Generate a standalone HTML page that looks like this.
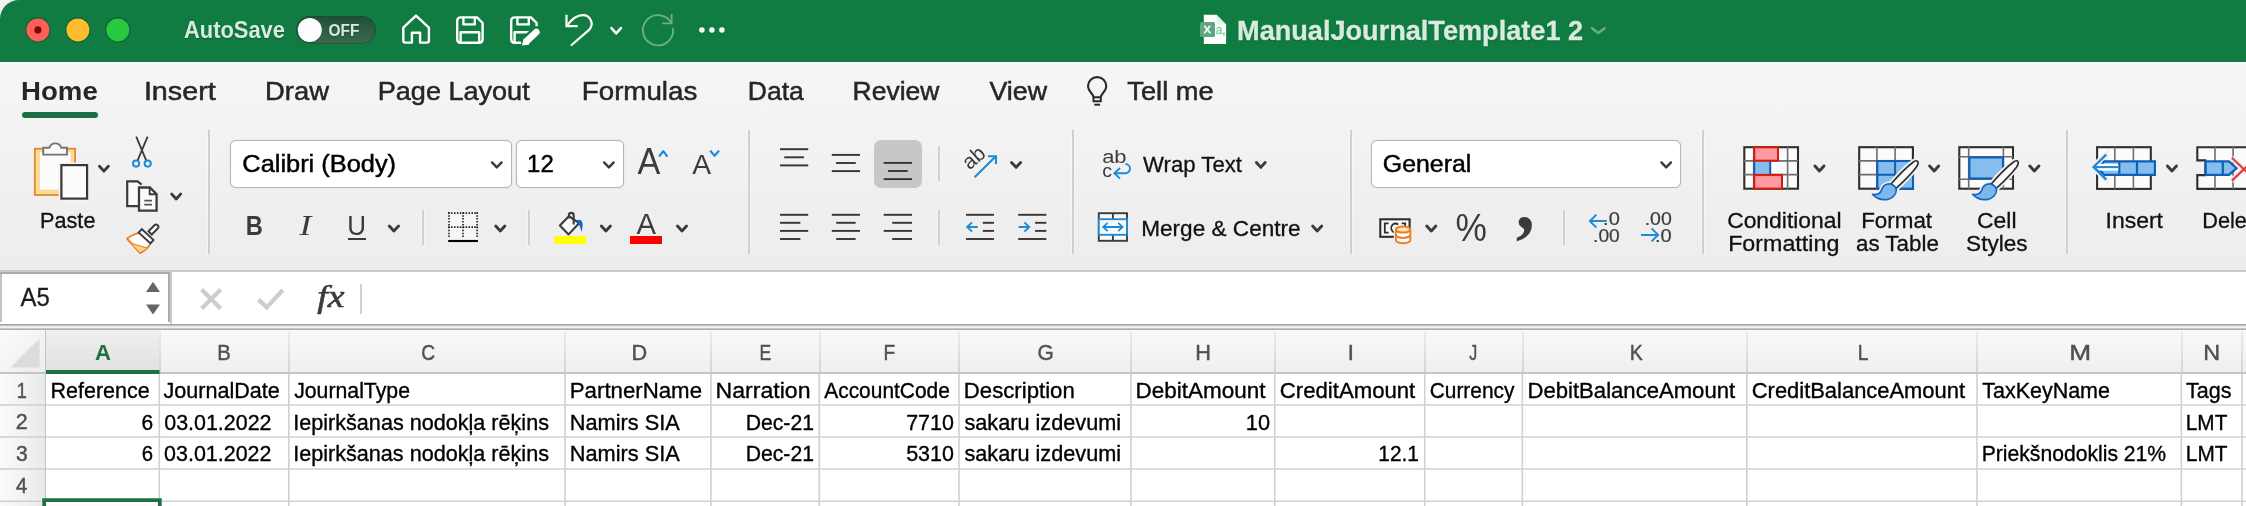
<!DOCTYPE html>
<html lang="en"><head><meta charset="utf-8"><title>ManualJournalTemplate1 2</title>
<style>
html,body{margin:0;padding:0}
body{width:2246px;height:506px;overflow:hidden;position:relative;background:#f1f1f1;font-family:"Liberation Sans",sans-serif}
#app{position:absolute;left:0;top:0;width:2246px;height:506px;overflow:hidden}
#app div{position:absolute}
.t{position:absolute;white-space:pre;line-height:normal;transform-origin:0 0;display:block}
svg{position:absolute;left:0;top:0;will-change:transform}
#txt{left:0;top:0;width:2246px;height:506px;will-change:transform}
</style></head>
<body><div id="app">
<div class="titlebar" style="left:0px;top:0px;width:2246px;height:62px;background:#107c41;border-top-left-radius:19px;"></div>
<div class="ribbon" style="left:0px;top:62px;width:2246px;height:208px;background:linear-gradient(#f6f6f6,#f3f3f3 30%,#efefef 70%,#ededed);"></div>
<div style="left:0px;top:270px;width:2246px;height:2px;background:#c9c9c9;"></div>
<div class="formulabar" style="left:0px;top:272px;width:2246px;height:52px;background:#fff;"></div>
<div style="left:0px;top:324px;width:2246px;height:1px;background:#a6a6a6;"></div>
<div style="left:0px;top:325px;width:2246px;height:1px;background:#bfbfbf;"></div>
<div style="left:0px;top:326px;width:2246px;height:1px;background:#ebebeb;"></div>
<div style="left:0px;top:327px;width:2246px;height:1px;background:#eeeeee;"></div>
<div style="left:0px;top:328px;width:2246px;height:1px;background:#c8c8c8;"></div>
<div style="left:0px;top:329px;width:2246px;height:1px;background:#adadad;"></div>
<div class="grid" style="left:0px;top:330px;width:2246px;height:176px;background:#fff;"></div>
<div class="colheads" style="left:0px;top:330px;width:2246px;height:42px;background:linear-gradient(#f9f9f9,#f4f4f4 50%,#efefef);"></div>
<div class="rowheads" style="left:0px;top:372px;width:45px;height:134px;background:linear-gradient(90deg,#fbfbfb,#f1f1f1 60%,#e9e9e9);"></div>
<div class="corner" style="left:0px;top:330px;width:45px;height:42px;background:linear-gradient(135deg,#fcfcfc,#ececec);"></div>
<div style="left:22px;top:112px;width:76px;height:6px;background:#1c6f42;border-radius:3px;"></div>
<div style="left:208px;top:130px;width:2px;height:124px;background:#cfcfcf;box-shadow:-1px 0 0 rgba(255,255,255,.4),1px 0 0 rgba(255,255,255,.4);"></div>
<div style="left:748px;top:130px;width:2px;height:124px;background:#cfcfcf;box-shadow:-1px 0 0 rgba(255,255,255,.4),1px 0 0 rgba(255,255,255,.4);"></div>
<div style="left:1072px;top:130px;width:2px;height:124px;background:#cfcfcf;box-shadow:-1px 0 0 rgba(255,255,255,.4),1px 0 0 rgba(255,255,255,.4);"></div>
<div style="left:1350px;top:130px;width:2px;height:124px;background:#cfcfcf;box-shadow:-1px 0 0 rgba(255,255,255,.4),1px 0 0 rgba(255,255,255,.4);"></div>
<div style="left:1702px;top:130px;width:2px;height:124px;background:#cfcfcf;box-shadow:-1px 0 0 rgba(255,255,255,.4),1px 0 0 rgba(255,255,255,.4);"></div>
<div style="left:2066px;top:130px;width:2px;height:124px;background:#cfcfcf;box-shadow:-1px 0 0 rgba(255,255,255,.4),1px 0 0 rgba(255,255,255,.4);"></div>
<div style="left:422px;top:210px;width:2px;height:35px;background:#cfcfcf;box-shadow:-1px 0 0 rgba(255,255,255,.4),1px 0 0 rgba(255,255,255,.4);"></div>
<div style="left:528px;top:210px;width:2px;height:35px;background:#cfcfcf;box-shadow:-1px 0 0 rgba(255,255,255,.4),1px 0 0 rgba(255,255,255,.4);"></div>
<div style="left:938px;top:146px;width:2px;height:35px;background:#cfcfcf;box-shadow:-1px 0 0 rgba(255,255,255,.4),1px 0 0 rgba(255,255,255,.4);"></div>
<div style="left:938px;top:210px;width:2px;height:35px;background:#cfcfcf;box-shadow:-1px 0 0 rgba(255,255,255,.4),1px 0 0 rgba(255,255,255,.4);"></div>
<div style="left:1563px;top:210px;width:2px;height:35px;background:#cfcfcf;box-shadow:-1px 0 0 rgba(255,255,255,.4),1px 0 0 rgba(255,255,255,.4);"></div>
<div class="combo" style="left:230px;top:140px;width:282px;height:48px;background:#fff;border:1px solid #b6b6b6;border-radius:6px;box-sizing:border-box;box-shadow:0 0 1px rgba(0,0,0,.22);"></div>
<div class="combo" style="left:516px;top:140px;width:108px;height:48px;background:#fff;border:1px solid #b6b6b6;border-radius:6px;box-sizing:border-box;box-shadow:0 0 1px rgba(0,0,0,.22);"></div>
<div style="left:347.9px;top:238px;width:17.9px;height:1.6px;background:#3b3b3b;"></div>
<div style="left:553.8px;top:236px;width:32.4px;height:8px;background:#ffff00;"></div>
<div style="left:630px;top:236px;width:32px;height:8px;background:#ff0000;"></div>
<div style="left:874px;top:140px;width:48px;height:48px;background:#c7c7c7;border-radius:7px;"></div>
<div class="combo" style="left:1371px;top:140px;width:310px;height:48px;background:#fff;border:1px solid #b6b6b6;border-radius:6px;box-sizing:border-box;box-shadow:0 0 1px rgba(0,0,0,.22);"></div>
<div style="left:0px;top:272px;width:170px;height:2px;background:#ababab;"></div>
<div style="left:0px;top:274px;width:2px;height:48px;background:#c2c2c2;"></div>
<div style="left:168px;top:272px;width:2px;height:50px;background:#ababab;"></div>
<div style="left:170px;top:272px;width:2px;height:52px;background:#cbcbcb;"></div>
<div style="left:360.2px;top:284px;width:1.4px;height:30px;background:#d2d2d2;"></div>
<div style="left:46px;top:330px;width:113.5px;height:42px;background:linear-gradient(#efefef,#e7e7e7 55%,#e1e1e1);"></div>
<div style="left:159px;top:331px;width:1.6px;height:41px;background:linear-gradient(#ececec,#d4d4d4);"></div>
<div style="left:288px;top:331px;width:1.6px;height:41px;background:linear-gradient(#ececec,#d4d4d4);"></div>
<div style="left:564px;top:331px;width:1.6px;height:41px;background:linear-gradient(#ececec,#d4d4d4);"></div>
<div style="left:710px;top:331px;width:1.6px;height:41px;background:linear-gradient(#ececec,#d4d4d4);"></div>
<div style="left:819px;top:331px;width:1.6px;height:41px;background:linear-gradient(#ececec,#d4d4d4);"></div>
<div style="left:958px;top:331px;width:1.6px;height:41px;background:linear-gradient(#ececec,#d4d4d4);"></div>
<div style="left:1130px;top:331px;width:1.6px;height:41px;background:linear-gradient(#ececec,#d4d4d4);"></div>
<div style="left:1274px;top:331px;width:1.6px;height:41px;background:linear-gradient(#ececec,#d4d4d4);"></div>
<div style="left:1424px;top:331px;width:1.6px;height:41px;background:linear-gradient(#ececec,#d4d4d4);"></div>
<div style="left:1522px;top:331px;width:1.6px;height:41px;background:linear-gradient(#ececec,#d4d4d4);"></div>
<div style="left:1746px;top:331px;width:1.6px;height:41px;background:linear-gradient(#ececec,#d4d4d4);"></div>
<div style="left:1976px;top:331px;width:1.6px;height:41px;background:linear-gradient(#ececec,#d4d4d4);"></div>
<div style="left:2181px;top:331px;width:1.6px;height:41px;background:linear-gradient(#ececec,#d4d4d4);"></div>
<div style="left:2241px;top:331px;width:1.6px;height:41px;background:linear-gradient(#ececec,#d4d4d4);"></div>
<div style="left:0px;top:372px;width:2246px;height:2px;background:#c4c4c4;"></div>
<div style="left:44.6px;top:330px;width:1.8px;height:176px;background:#c4c4c4;"></div>
<svg width="2246" height="506" viewBox="0 0 2246 506">
<circle cx="37.9" cy="29.9" r="12.6" fill="#0b6133"/>
<circle cx="37.9" cy="29.9" r="11.5" fill="#fe5f57"/>
<circle cx="77.9" cy="29.9" r="12.6" fill="#0b6133"/>
<circle cx="77.9" cy="29.9" r="11.5" fill="#febc2e"/>
<circle cx="117.8" cy="29.9" r="12.6" fill="#0b6133"/>
<circle cx="117.8" cy="29.9" r="11.5" fill="#28c840"/>
<circle cx="37.9" cy="29.9" r="3.6" fill="#7a0a05"/>
<defs><linearGradient id="tg" x1="0" y1="0" x2="0" y2="1"><stop offset="0" stop-color="#1f4f35"/><stop offset=".45" stop-color="#2a5d41"/><stop offset="1" stop-color="#386b4e"/></linearGradient></defs>
<rect x="296" y="16" width="80" height="28" rx="14" fill="url(#tg)"/>
<rect x="296.5" y="16.5" width="79" height="27" rx="13.5" fill="none" stroke="#1c4a30" stroke-width="1" opacity=".6"/>
<circle cx="309.8" cy="30.6" r="12.3" fill="#123d26" opacity=".45"/>
<circle cx="309.8" cy="30" r="12" fill="#fdfdfd"/>
<path d="M403.3 27.6 L416 15.6 L428.9 27.6 V40.6 Q428.9 42.6 426.9 42.6 H420.1 V32.8 H411.9 V42.6 H405.3 Q403.3 42.6 403.3 40.6 Z" fill="none" stroke="#fff" stroke-width="2.4" stroke-linejoin="round"/>
<path d="M460.5 17.4 H477 L482.6 23 V39.2 Q482.6 42.7 479.1 42.7 H460.7 Q457.2 42.7 457.2 39.2 V20.9 Q457.2 17.4 460.7 17.4 Z M463.4 17.4 V24.4 H474.8 V17.4 M460.6 42.7 V32.2 H479.2 V42.7" fill="none" stroke="#fff" stroke-width="2.4" stroke-linejoin="round"/>
<path d="M514.5 17.4 H531 L536.6 23 V26.5 M524 42.7 H514.7 Q511.2 42.7 511.2 39.2 V20.9 Q511.2 17.4 514.7 17.4 M517.4 17.4 V24.4 H528.8 V17.4 M514.6 42.7 V32.2 H529" fill="none" stroke="#fff" stroke-width="2.4" stroke-linejoin="round"/>
<path d="M526.6 41.3 L536.3 32.1" stroke="#107c41" stroke-width="11.6" stroke-linecap="round"/>
<path d="M526.6 41.3 L536.3 32.1" stroke="#fff" stroke-width="6.8" stroke-linecap="round"/>
<path d="M522.6 45.1 L523.8 39.4 L529 44 Z" fill="#fff" stroke="#fff" stroke-width="1" stroke-linejoin="round"/>
<path d="M566.5 14.8 V26.1 H577.7" fill="none" stroke="#fff" stroke-width="2.2" stroke-linejoin="miter"/>
<path d="M567 25.6 C571.5 19.5 576.5 15.2 582.8 15.2 A8.6 8.6 0 0 1 589.3 29.6 L571.6 45" fill="none" stroke="#fff" stroke-width="2.2" stroke-linecap="round"/>
<path d="M611.45 28.05 L616.20 33.35 L620.95 28.05" fill="none" stroke="#fff" stroke-width="2.5" stroke-linecap="round" stroke-linejoin="round"/>
<g opacity=".38" fill="none" stroke="#fff" stroke-width="1.9"><path d="M672.95 27.9 A15.1 15.1 0 1 1 671.5 23.4"/><path d="M662.1 23.4 H671.6 V14.1"/></g>
<circle cx="701.9" cy="30" r="2.75" fill="#fff"/>
<circle cx="711.9" cy="30" r="2.75" fill="#fff"/>
<circle cx="721.9" cy="30" r="2.75" fill="#fff"/>
<path d="M1203.8 14.8 H1216.5 L1226.1 24.4 V44.1 H1203.8 Z" fill="#fff"/>
<path d="M1216.5 14.8 L1226.1 24.4 H1216.5 Z" fill="#e3efe8"/>
<rect x="1200" y="21.9" width="15" height="15.2" rx="1.6" fill="#5ea781"/>
<path d="M1592.05 28.15 L1598.30 32.95 L1604.55 28.15" fill="none" stroke="#fff" stroke-width="2.5" stroke-linecap="round" stroke-linejoin="round" opacity="0.38"/>
<path d="M1093.5 97.3 C1093.5 93.4 1088 91.6 1088 86.3 A9.15 9.15 0 0 1 1106.3 86.3 C1106.3 91.6 1100.8 93.4 1100.8 97.3" fill="none" stroke="#2b2b2b" stroke-width="2.1"/>
<path d="M1093.5 97.2 H1100.8 V101.2 H1093.5 Z" fill="none" stroke="#2b2b2b" stroke-width="2"/>
<path d="M1094.3 104.7 H1100.1" stroke="#2b2b2b" stroke-width="2"/>
<rect x="34.8" y="148.7" width="40.3" height="46.3" fill="#f9dc96" stroke="#e8822a" stroke-width="1.7"/>
<rect x="39.9" y="152" width="30.7" height="37.6" fill="#fbfbfb"/>
<path d="M43.2 154.6 V147.7 H49.4 A6.2 6.2 0 0 1 61.2 147.7 H67 V154.6 Z" fill="#fbfbfb" stroke="#757575" stroke-width="1.9"/>
<rect x="58.6" y="162.4" width="31" height="38.8" fill="#f3f3f3"/>
<rect x="61.4" y="165.1" width="25.7" height="33.5" fill="#fbfbfb" stroke="#383838" stroke-width="2.2"/>
<path d="M99.45 166.25 L103.90 171.15 L108.35 166.25" fill="none" stroke="#3b3b3b" stroke-width="2.9" stroke-linecap="round" stroke-linejoin="round"/>
<path d="M136.2 136.6 L146.2 160.4 M147.6 136.6 L137.6 160.4" stroke="#3b3b3b" stroke-width="1.8" fill="none"/>
<circle cx="136.1" cy="163.6" r="3.1" fill="#f4f4f4" stroke="#1e8bd6" stroke-width="2"/><circle cx="147.7" cy="163.6" r="3.1" fill="#f4f4f4" stroke="#1e8bd6" stroke-width="2"/>
<path d="M138.4 206.2 H127.2 V181.4 H137.6 L141.6 184.6" fill="#fbfbfb" stroke="#3b3b3b" stroke-width="2.2" stroke-linejoin="miter"/>
<path d="M139 187.5 H149.9 L156.6 194.2 V210.7 H139 Z" fill="#fbfbfb" stroke="#3b3b3b" stroke-width="2.3" stroke-linejoin="miter"/>
<path d="M149.7 187.6 V194.2 H156.6" fill="none" stroke="#3b3b3b" stroke-width="1.9"/>
<path d="M144.3 200.6 H152 M144.3 204.7 H152" stroke="#555" stroke-width="1.7"/>
<path d="M171.75 194.15 L176.20 199.05 L180.65 194.15" fill="none" stroke="#3b3b3b" stroke-width="2.9" stroke-linecap="round" stroke-linejoin="round"/>
<path d="M127 238.5 Q133.4 234 140.4 232.4 L150.8 242.8 Q147.6 249.4 140 253.2 Z" fill="#fdfdfd" stroke="#e8822a" stroke-width="1.9" stroke-linejoin="round"/>
<path d="M131.2 243.2 L146.8 248 L140.1 252.2 Z" fill="#fbd38d"/>
<path d="M131.2 243.2 L146.8 248" stroke="#e8822a" stroke-width="1.2" fill="none"/>
<g transform="translate(146.1 236.2) rotate(43)"><rect x="-8" y="-2.3" width="16" height="4.6" fill="#fbfbfb" stroke="#3b3b3b" stroke-width="1.9"/></g>
<g transform="translate(153.9 229.1) rotate(-45)"><path d="M-5.4 -2.3 H3.1 A2.3 2.3 0 0 1 3.1 2.3 H-5.4 Z" fill="#fbfbfb" stroke="#3b3b3b" stroke-width="1.9"/></g>
<path d="M492.00 162.40 L496.80 167.40 L501.60 162.40" fill="none" stroke="#3b3b3b" stroke-width="2.4" stroke-linecap="round" stroke-linejoin="round"/>
<path d="M604.10 162.40 L608.90 167.40 L613.70 162.40" fill="none" stroke="#3b3b3b" stroke-width="2.4" stroke-linecap="round" stroke-linejoin="round"/>
<path d="M659.60 155.90 L663.25 151.10 L666.90 155.90" fill="none" stroke="#1e8bd6" stroke-width="2.2" stroke-linecap="round" stroke-linejoin="round"/>
<path d="M710.70 151.30 L714.60 155.70 L718.50 151.30" fill="none" stroke="#1e8bd6" stroke-width="2.2" stroke-linecap="round" stroke-linejoin="round"/>
<path d="M389.25 226.05 L393.90 230.95 L398.55 226.05" fill="none" stroke="#3b3b3b" stroke-width="2.9" stroke-linecap="round" stroke-linejoin="round"/>
<rect x="448.2" y="212.3" width="29.7" height="27" fill="#f7f7f7"/>
<g stroke="#1c1c1c" stroke-width="1.6" stroke-dasharray="1.5 1.41" fill="none"><path d="M448.2 213.1 H478"/><path d="M449 212.3 V238.4"/><path d="M477.1 212.3 V238.4"/><path d="M463 212.3 V238.4"/><path d="M448.2 227.1 H478"/></g>
<path d="M448.2 241 H477.9" stroke="#000" stroke-width="2.1"/>
<path d="M495.75 226.05 L500.30 230.95 L504.85 226.05" fill="none" stroke="#3b3b3b" stroke-width="2.9" stroke-linecap="round" stroke-linejoin="round"/>
<path d="M559.9 225.6 L568.9 216.2 L579 223.2 L568.6 234.4 Z" fill="#fafafa" stroke="#3b3b3b" stroke-width="2.1" stroke-linejoin="round"/>
<path d="M568.9 217.6 V215.3 A2.4 2.4 0 0 1 573.7 215.3 V223.8" fill="none" stroke="#3b3b3b" stroke-width="2.1" stroke-linecap="round"/>
<path d="M576.7 220.4 C579.6 218.6 582.8 221 582.7 224.6 C582.6 227.6 581.9 230.2 581.3 232.3 C580.9 228.6 579.8 225.4 577.3 222.6 Z" fill="#1565c0"/>
<path d="M601.35 226.05 L605.90 230.95 L610.45 226.05" fill="none" stroke="#3b3b3b" stroke-width="2.9" stroke-linecap="round" stroke-linejoin="round"/>
<path d="M677.45 226.05 L682.00 230.95 L686.55 226.05" fill="none" stroke="#3b3b3b" stroke-width="2.9" stroke-linecap="round" stroke-linejoin="round"/>
<path d="M780.00 149.2 H808.20" stroke="#343434" stroke-width="1.9"/>
<path d="M784.23 157.3 H803.97" stroke="#343434" stroke-width="1.9"/>
<path d="M780.00 165.4 H808.20" stroke="#343434" stroke-width="1.9"/>
<path d="M831.80 154.9 H860.00" stroke="#343434" stroke-width="1.9"/>
<path d="M836.03 163 H855.77" stroke="#343434" stroke-width="1.9"/>
<path d="M831.80 171.1 H860.00" stroke="#343434" stroke-width="1.9"/>
<path d="M883.70 162.9 H912.00" stroke="#343434" stroke-width="1.9"/>
<path d="M887.95 171 H907.75" stroke="#343434" stroke-width="1.9"/>
<path d="M883.70 179.1 H912.00" stroke="#343434" stroke-width="1.9"/>
<g transform="translate(969.4 170.6) rotate(-41)"><text x="0" y="0" font-family="Liberation Sans, sans-serif" font-size="21" textLength="23.2" lengthAdjust="spacingAndGlyphs" fill="#3b3b3b">ab</text></g>
<path d="M974.6 177.3 L995.3 156.7 M987.9 156.2 H996 V164.1" fill="none" stroke="#1e8bd6" stroke-width="2.1" stroke-linejoin="miter"/>
<path d="M1011.55 162.45 L1016.10 167.35 L1020.65 162.45" fill="none" stroke="#3b3b3b" stroke-width="2.9" stroke-linecap="round" stroke-linejoin="round"/>
<path d="M780.00 214.8 H808.20" stroke="#343434" stroke-width="1.9"/>
<path d="M780.00 222.8 H800.40" stroke="#343434" stroke-width="1.9"/>
<path d="M780.00 230.9 H808.20" stroke="#343434" stroke-width="1.9"/>
<path d="M780.00 239 H800.40" stroke="#343434" stroke-width="1.9"/>
<path d="M831.80 214.8 H860.00" stroke="#343434" stroke-width="1.9"/>
<path d="M836.20 222.8 H855.60" stroke="#343434" stroke-width="1.9"/>
<path d="M831.80 230.9 H860.00" stroke="#343434" stroke-width="1.9"/>
<path d="M836.20 239 H855.60" stroke="#343434" stroke-width="1.9"/>
<path d="M883.70 214.8 H912.00" stroke="#343434" stroke-width="1.9"/>
<path d="M892.20 222.8 H912.00" stroke="#343434" stroke-width="1.9"/>
<path d="M883.70 230.9 H912.00" stroke="#343434" stroke-width="1.9"/>
<path d="M892.20 239 H912.00" stroke="#343434" stroke-width="1.9"/>
<path d="M966.00 214.8 H994.00" stroke="#343434" stroke-width="1.9"/>
<path d="M982.80 222.8 H994.00" stroke="#343434" stroke-width="1.9"/>
<path d="M982.80 230.9 H994.00" stroke="#343434" stroke-width="1.9"/>
<path d="M966.00 239 H994.00" stroke="#343434" stroke-width="1.9"/>
<path d="M967.4 227 H977.8 M972 222.4 L967.2 227 L972 231.6" fill="none" stroke="#1e8bd6" stroke-width="1.9"/>
<path d="M1018.20 214.8 H1046.30" stroke="#343434" stroke-width="1.9"/>
<path d="M1035.10 222.8 H1046.30" stroke="#343434" stroke-width="1.9"/>
<path d="M1035.10 230.9 H1046.30" stroke="#343434" stroke-width="1.9"/>
<path d="M1018.20 239 H1046.30" stroke="#343434" stroke-width="1.9"/>
<path d="M1018.6 227 H1029 M1024.4 222.4 L1029.2 227 L1024.4 231.6" fill="none" stroke="#1e8bd6" stroke-width="1.9"/>
<path d="M1114.6 173.2 H1125.4 A4.6 4.6 0 0 0 1125.4 164" fill="none" stroke="#1e8bd6" stroke-width="1.9"/>
<path d="M1120 168 L1114.4 173.2 L1120 178.6" fill="none" stroke="#1e8bd6" stroke-width="1.9"/>
<path d="M1256.45 162.45 L1260.80 167.35 L1265.15 162.45" fill="none" stroke="#3b3b3b" stroke-width="2.9" stroke-linecap="round" stroke-linejoin="round"/>
<rect x="1098.8" y="213.2" width="28.2" height="27.6" fill="#fafafa" stroke="#3b3b3b" stroke-width="1.9"/>
<path d="M1112.9 213 V241" stroke="#3b3b3b" stroke-width="1.9"/>
<rect x="1098.8" y="219.2" width="28.2" height="15.6" fill="#fafafa" stroke="#1e8bd6" stroke-width="1.9"/>
<path d="M1103.4 227 H1122.4 M1107.6 222.8 L1103.2 227 L1107.6 231.2 M1118.2 222.8 L1122.6 227 L1118.2 231.2" fill="none" stroke="#1e8bd6" stroke-width="1.8"/>
<path d="M1312.65 226.05 L1317.20 230.95 L1321.75 226.05" fill="none" stroke="#3b3b3b" stroke-width="2.9" stroke-linecap="round" stroke-linejoin="round"/>
<path d="M1661.40 162.40 L1666.20 167.40 L1671.00 162.40" fill="none" stroke="#3b3b3b" stroke-width="2.4" stroke-linecap="round" stroke-linejoin="round"/>
<rect x="1380.3" y="219.3" width="29.3" height="17.5" fill="#fafafa" stroke="#2e2e2e" stroke-width="2.1"/>
<path d="M1388.6 223.4 H1384.8 V232.6 H1388.6 M1401.6 223.4 H1405.2 V227" fill="none" stroke="#2e2e2e" stroke-width="1.8"/>
<path d="M1398.2 224.6 A4.2 4.6 0 1 0 1398.2 231.6" fill="none" stroke="#2e2e2e" stroke-width="1.8"/>
<path d="M1393.8 229 V240.6 A9.3 4 0 0 0 1412.4 240.6 V229 Z" fill="#f1f1f1"/>
<path d="M1395.9 229.6 V240.2 A7.2 3 0 0 0 1410.3 240.2 V229.6 Z" fill="#fff" stroke="#e8822a" stroke-width="2"/>
<path d="M1395.9 234.9 A7.2 3 0 0 0 1410.3 234.9" fill="none" stroke="#e8822a" stroke-width="2"/>
<ellipse cx="1403.1" cy="229.6" rx="7.2" ry="3" fill="#fde9b5" stroke="#e8822a" stroke-width="2"/>
<path d="M1426.75 226.05 L1431.30 230.95 L1435.85 226.05" fill="none" stroke="#3b3b3b" stroke-width="2.9" stroke-linecap="round" stroke-linejoin="round"/>
<path d="M1590 221.1 H1606.8 M1596.4 214.6 L1589.9 221.1 L1596.4 227.6" fill="none" stroke="#1e8bd6" stroke-width="2"/>
<path d="M1641 234.9 H1658 M1651.6 228.4 L1658.1 234.9 L1651.6 241.4" fill="none" stroke="#1e8bd6" stroke-width="2"/>
<rect x="1744.3" y="147.2" width="53.7" height="41.5" fill="#fbfbfb" stroke="#2f2f2f" stroke-width="2.1"/>
<path d="M1753.7 147 V189 M1787.6 147 V189 M1744 160.9 H1798 M1744 174.6 H1798" stroke="#6e6e6e" stroke-width="1.6" fill="none"/>
<rect x="1754.3" y="161.4" width="15.8" height="13" fill="#85bdee"/>
<path d="M1754.2 160.5 V175 M1770.2 160.5 V175" stroke="#0f5fb5" stroke-width="2"/>
<rect x="1754.3" y="147.3" width="23.7" height="13.4" fill="#ff9aa0" stroke="#d8180b" stroke-width="2"/>
<rect x="1754.3" y="174.9" width="27.7" height="13.7" fill="#ff9aa0" stroke="#d8180b" stroke-width="2"/>
<path d="M1814.95 165.95 L1819.45 170.95 L1823.95 165.95" fill="none" stroke="#3b3b3b" stroke-width="2.9" stroke-linecap="round" stroke-linejoin="round"/>
<rect x="1859.2" y="147.2" width="53.7" height="41.5" fill="#fbfbfb" stroke="#2f2f2f" stroke-width="2.1"/>
<path d="M1876.9 147 V189 M1895.1 147 V189 M1859 160.9 H1913 M1859 174.6 H1913" stroke="#6e6e6e" stroke-width="1.6" fill="none"/>
<rect x="1877.3" y="161" width="35.7" height="27.7" fill="#85bdee" stroke="#0f5fb5" stroke-width="2.1"/>
<path d="M1895.1 161 V189 M1877 174.7 H1913" stroke="#0f5fb5" stroke-width="2"/>
<g transform="translate(0 0)"><path d="M1890.3 183.9 C1886 183.6 1882.6 186.4 1881.4 190.4 C1880.2 193.6 1876.4 194.9 1872.5 194.4 C1876.6 198.6 1882.6 200.2 1887.6 199.4 C1892.4 198.4 1896.6 194.4 1896.3 189.6 C1896 187.6 1893.5 185 1890.3 183.9 Z" fill="#f0f0f0" stroke="#f0f0f0" stroke-width="5"/><g transform="translate(1893.65 186.06) rotate(-45.9)"><path d="M0 -3.4 C12 -4 24 -3.7 31 -2.6 C33.6 -2.2 34.7 -1 34.3 0.3 C33.9 1.7 32 2.7 29 3.1 C20 4.1 10 3.9 0 3.4 Z" fill="#f0f0f0" stroke="#f0f0f0" stroke-width="5.4"/><path d="M0 -3.4 C12 -4 24 -3.7 31 -2.6 C33.6 -2.2 34.7 -1 34.3 0.3 C33.9 1.7 32 2.7 29 3.1 C20 4.1 10 3.9 0 3.4 Z" fill="#fbfbfb" stroke="#303030" stroke-width="1.7" stroke-linejoin="round"/></g><path d="M1890.3 183.9 C1886 183.6 1882.6 186.4 1881.4 190.4 C1880.2 193.6 1876.4 194.9 1872.5 194.4 C1876.6 198.6 1882.6 200.2 1887.6 199.4 C1892.4 198.4 1896.6 194.4 1896.3 189.6 C1896 187.6 1893.5 185 1890.3 183.9 Z" fill="#7db8ec" stroke="#1565c0" stroke-width="1.6" stroke-linejoin="round"/></g>
<path d="M1929.65 165.95 L1934.15 170.95 L1938.65 165.95" fill="none" stroke="#3b3b3b" stroke-width="2.9" stroke-linecap="round" stroke-linejoin="round"/>
<rect x="1959.3" y="147.2" width="53.7" height="41.5" fill="#fbfbfb" stroke="#2f2f2f" stroke-width="2.1"/>
<path d="M1968.7 147 V189 M2003.4 147 V189 M1959 156.7 H2013 M1959 179.2 H2013" stroke="#6e6e6e" stroke-width="1.6" fill="none"/>
<rect x="1969.4" y="157.4" width="33.6" height="21.1" fill="#85bdee" stroke="#0f5fb5" stroke-width="2.1"/>
<g transform="translate(100.2 0)"><path d="M1890.3 183.9 C1886 183.6 1882.6 186.4 1881.4 190.4 C1880.2 193.6 1876.4 194.9 1872.5 194.4 C1876.6 198.6 1882.6 200.2 1887.6 199.4 C1892.4 198.4 1896.6 194.4 1896.3 189.6 C1896 187.6 1893.5 185 1890.3 183.9 Z" fill="#f0f0f0" stroke="#f0f0f0" stroke-width="5"/><g transform="translate(1893.65 186.06) rotate(-45.9)"><path d="M0 -3.4 C12 -4 24 -3.7 31 -2.6 C33.6 -2.2 34.7 -1 34.3 0.3 C33.9 1.7 32 2.7 29 3.1 C20 4.1 10 3.9 0 3.4 Z" fill="#f0f0f0" stroke="#f0f0f0" stroke-width="5.4"/><path d="M0 -3.4 C12 -4 24 -3.7 31 -2.6 C33.6 -2.2 34.7 -1 34.3 0.3 C33.9 1.7 32 2.7 29 3.1 C20 4.1 10 3.9 0 3.4 Z" fill="#fbfbfb" stroke="#303030" stroke-width="1.7" stroke-linejoin="round"/></g><path d="M1890.3 183.9 C1886 183.6 1882.6 186.4 1881.4 190.4 C1880.2 193.6 1876.4 194.9 1872.5 194.4 C1876.6 198.6 1882.6 200.2 1887.6 199.4 C1892.4 198.4 1896.6 194.4 1896.3 189.6 C1896 187.6 1893.5 185 1890.3 183.9 Z" fill="#7db8ec" stroke="#1565c0" stroke-width="1.6" stroke-linejoin="round"/></g>
<path d="M2029.85 165.95 L2034.35 170.95 L2038.85 165.95" fill="none" stroke="#3b3b3b" stroke-width="2.9" stroke-linecap="round" stroke-linejoin="round"/>
<rect x="2097.1" y="147.2" width="53.7" height="41.7" fill="#fbfbfb" stroke="#2f2f2f" stroke-width="2.1"/>
<path d="M2114.8 147 V189 M2133.4 147 V189" stroke="#6e6e6e" stroke-width="1.6" fill="none"/>
<path d="M2106.5 153 L2091.5 166.8 L2106.5 181 Z" fill="#f0f0f0" stroke="#f0f0f0" stroke-width="4"/>
<path d="M2104.4 161.4 H2154.9 V174.9 H2104.4 L2098 168.2 Z" fill="#85bdee" stroke="#0f5fb5" stroke-width="2.2"/>
<path d="M2119.3 161.4 V174.9 M2137 161.4 V174.9" stroke="#0f5fb5" stroke-width="2.2"/>
<path d="M2094 163.7 H2118.2 V170.6 H2094 Z" fill="#fff"/>
<path d="M2094.4 167.1 H2118" stroke="#2088d8" stroke-width="2.1"/>
<path d="M2106.3 154.5 L2093.6 166.9 L2106.3 179.6" fill="none" stroke="#2088d8" stroke-width="2.4"/>
<path d="M2167.45 165.95 L2171.95 170.95 L2176.45 165.95" fill="none" stroke="#3b3b3b" stroke-width="2.9" stroke-linecap="round" stroke-linejoin="round"/>
<path d="M2250 147.2 H2197.3 V160.4 H2205.4 V175.1 H2197.3 V188.9 H2250" fill="#fbfbfb" stroke="#2f2f2f" stroke-width="2.1"/>
<path d="M2215 147 V189 M2233.1 147 V189" stroke="#6e6e6e" stroke-width="1.6" fill="none"/>
<path d="M2205.7 161.4 H2229 L2236.6 168.2 L2229 174.9 H2205.7 Z" fill="#85bdee" stroke="#0f5fb5" stroke-width="2.2"/>
<path d="M2222.8 161.4 V174.9" stroke="#0f5fb5" stroke-width="2.2"/>
<path d="M2231.9 157.8 L2256 180.6 M2256 157.8 L2231.9 180.6" stroke="#f0f0f0" stroke-width="5.6"/>
<path d="M2231.9 157.8 L2256 180.6 M2256 157.8 L2231.9 180.6" stroke="#e83a3a" stroke-width="2.2"/>
<path d="M146 291.9 L153 281.7 L160 291.9 Z M146 304.4 L153 314.6 L160 304.4 Z" fill="#666"/>
<path d="M201.6 289.4 L220.6 308.4 M220.6 289.4 L201.6 308.4" stroke="#cdcdcd" stroke-width="4.2" fill="none"/>
<path d="M258.4 299.6 L266.8 307.4 L282.8 290" stroke="#cdcdcd" stroke-width="4.2" fill="none"/>
<g stroke="#d1d1d1" stroke-width="1.6" fill="none"><path d="M46 405 H2246"/><path d="M46 437 H2246"/><path d="M46 469 H2246"/><path d="M46 501.2 H2246"/><path d="M159.3 374 V506"/><path d="M288.8 374 V506"/><path d="M565.0 374 V506"/><path d="M710.9 374 V506"/><path d="M819.2 374 V506"/><path d="M959.0 374 V506"/><path d="M1131.0 374 V506"/><path d="M1274.7 374 V506"/><path d="M1424.7 374 V506"/><path d="M1522.3 374 V506"/><path d="M1746.8 374 V506"/><path d="M1977.0 374 V506"/><path d="M2181.4 374 V506"/><path d="M2242.0 374 V506"/></g>
<g stroke="#cfcfcf" stroke-width="1.6" fill="none"><path d="M0 405 H45"/><path d="M0 437 H45"/><path d="M0 469 H45"/><path d="M0 501.2 H45"/></g>
<path d="M10.4 367.4 H39.6 V338.6 Z" fill="#dcdcdc"/>
<rect x="46" y="370" width="113.6" height="4" fill="#1e7145"/>
<path d="M44.2 507 V500.2 H159.8 V507" fill="none" stroke="#1e7145" stroke-width="3.8"/>
</svg>
<div id="txt">
<span class="t" id="t0" style="left:184px;top:16px;font-size:23px;color:#d9ebe0;font-family:'Liberation Sans',sans-serif;font-weight:700;transform:translate(0.02px,0.90px) scaleX(0.9515);text-shadow:0 1px 1.5px rgba(0,40,15,.35);">AutoSave</span>
<span class="t" id="t1" style="left:328px;top:21px;font-size:15.6px;color:#d9ebe0;font-family:'Liberation Sans',sans-serif;font-weight:700;transform:translate(0.47px,0.70px) scaleX(0.9914);text-shadow:0 1px 1.5px rgba(0,40,15,.35);">OFF</span>
<span class="t" id="t2" style="left:1203px;top:21px;font-size:13px;color:#fff;font-family:'Liberation Sans',sans-serif;transform:translate(0.69px,0.20px) scaleX(1.0853);-webkit-text-stroke:0.45px #fff;">x</span>
<span class="t" id="t3" style="left:1215px;top:21px;font-size:13px;color:#7fd3a5;font-family:'Liberation Sans',sans-serif;transform:translate(0.65px,0.60px) scaleX(0.9276);-webkit-text-stroke:0.45px #7fd3a5;">a,</span>
<span class="t" id="t4" style="left:1237px;top:15px;font-size:27px;color:#d9ebe0;font-family:'Liberation Sans',sans-serif;font-weight:700;transform:translate(0.04px,0.90px) scaleX(1.0042);-webkit-text-stroke:0.3px #d9ebe0;text-shadow:0 1px 1.5px rgba(0,40,15,.35);">ManualJournalTemplate1 2</span>
<span class="t" id="t5" style="left:21px;top:76px;font-size:25.8px;color:#262626;font-family:'Liberation Sans',sans-serif;font-weight:700;transform:translate(0.00px,0.90px) scaleX(1.0708);">Home</span>
<span class="t" id="t6" style="left:143px;top:76px;font-size:25.8px;color:#262626;font-family:'Liberation Sans',sans-serif;transform:translate(0.89px,0.90px) scaleX(1.1129);-webkit-text-stroke:0.5px #262626;">Insert</span>
<span class="t" id="t7" style="left:265px;top:76px;font-size:25.8px;color:#262626;font-family:'Liberation Sans',sans-serif;transform:translate(0.07px,0.90px) scaleX(1.0617);-webkit-text-stroke:0.5px #262626;">Draw</span>
<span class="t" id="t8" style="left:377px;top:76px;font-size:25.8px;color:#262626;font-family:'Liberation Sans',sans-serif;transform:translate(0.78px,0.90px) scaleX(1.0484);-webkit-text-stroke:0.5px #262626;">Page Layout</span>
<span class="t" id="t9" style="left:581px;top:76px;font-size:25.8px;color:#262626;font-family:'Liberation Sans',sans-serif;transform:translate(0.79px,0.90px) scaleX(1.0743);-webkit-text-stroke:0.5px #262626;">Formulas</span>
<span class="t" id="t10" style="left:747px;top:76px;font-size:25.8px;color:#262626;font-family:'Liberation Sans',sans-serif;transform:translate(0.86px,0.90px) scaleX(1.0277);-webkit-text-stroke:0.5px #262626;">Data</span>
<span class="t" id="t11" style="left:852px;top:76px;font-size:25.8px;color:#262626;font-family:'Liberation Sans',sans-serif;transform:translate(0.61px,0.90px) scaleX(1.0252);-webkit-text-stroke:0.5px #262626;">Review</span>
<span class="t" id="t12" style="left:989px;top:76px;font-size:25.8px;color:#262626;font-family:'Liberation Sans',sans-serif;transform:translate(0.45px,0.90px) scaleX(1.0390);-webkit-text-stroke:0.5px #262626;">View</span>
<span class="t" id="t13" style="left:1127px;top:76px;font-size:25.8px;color:#262626;font-family:'Liberation Sans',sans-serif;transform:translate(0.31px,0.90px) scaleX(1.0560);-webkit-text-stroke:0.5px #262626;">Tell me</span>
<span class="t" id="t14" style="left:40px;top:207px;font-size:22.2px;color:#111;font-family:'Liberation Sans',sans-serif;transform:translate(0.07px,0.80px) scaleX(0.9756);-webkit-text-stroke:0.3px #111;">Paste</span>
<span class="t" id="t15" style="left:242px;top:150px;font-size:23.5px;color:#000;font-family:'Liberation Sans',sans-serif;transform:translate(0.35px,0.90px) scaleX(1.0796);-webkit-text-stroke:0.45px #000;">Calibri (Body)</span>
<span class="t" id="t16" style="left:527px;top:150px;font-size:23.5px;color:#000;font-family:'Liberation Sans',sans-serif;transform:translate(0.12px,0.90px) scaleX(1.0175);-webkit-text-stroke:0.45px #000;">12</span>
<span class="t" id="t17" style="left:637px;top:140px;font-size:36px;color:#3b3b3b;font-family:'Liberation Sans',sans-serif;transform:translate(0.44px,0.60px) scaleX(0.9503);">A</span>
<span class="t" id="t18" style="left:692px;top:148px;font-size:28px;color:#3b3b3b;font-family:'Liberation Sans',sans-serif;transform:translate(0.37px,0.60px) scaleX(1.0089);">A</span>
<span class="t" id="t19" style="left:245px;top:211px;font-size:27px;color:#3b3b3b;font-family:'Liberation Sans',sans-serif;font-weight:700;transform:translate(0.73px,0.40px) scaleX(0.8759);">B</span>
<span class="t" id="t20" style="left:299px;top:209px;font-size:29.5px;color:#3b3b3b;font-family:'Liberation Serif',serif;font-style:italic;transform:translate(0.61px,0.40px) scaleX(1.2002);">I</span>
<span class="t" id="t21" style="left:347px;top:211px;font-size:27px;color:#3b3b3b;font-family:'Liberation Sans',sans-serif;transform:translate(0.37px,0.40px) scaleX(0.9622);">U</span>
<span class="t" id="t22" style="left:636px;top:206px;font-size:30.3px;color:#3b3b3b;font-family:'Liberation Sans',sans-serif;transform:translate(0.53px,0.60px) scaleX(0.9661);">A</span>
<span class="t" id="t23" style="left:1102px;top:146px;font-size:17.5px;color:#3b3b3b;font-family:'Liberation Sans',sans-serif;transform:translate(0.14px,0.60px) scaleX(1.2554);">ab</span>
<span class="t" id="t24" style="left:1102px;top:160px;font-size:17.5px;color:#3b3b3b;font-family:'Liberation Sans',sans-serif;transform:translate(0.22px,0.80px) scaleX(1.1222);">c</span>
<span class="t" id="t25" style="left:1143px;top:151px;font-size:22.2px;color:#111;font-family:'Liberation Sans',sans-serif;transform:translate(0.11px,0.90px) scaleX(0.9979);-webkit-text-stroke:0.3px #111;">Wrap Text</span>
<span class="t" id="t26" style="left:1141px;top:216px;font-size:22.2px;color:#111;font-family:'Liberation Sans',sans-serif;transform:translate(0.23px,0.00px) scaleX(1.0179);-webkit-text-stroke:0.3px #111;">Merge &amp; Centre</span>
<span class="t" id="t27" style="left:1382px;top:150px;font-size:23.5px;color:#000;font-family:'Liberation Sans',sans-serif;transform:translate(0.82px,0.90px) scaleX(1.0579);-webkit-text-stroke:0.45px #000;">General</span>
<span class="t" id="t28" style="left:1455px;top:206px;font-size:39px;color:#3b3b3b;font-family:'Liberation Sans',sans-serif;transform:translate(0.51px,0.40px) scaleX(0.9041);">%</span>
<span class="t" id="t29" style="left:1515px;top:156px;font-size:81px;color:#3b3b3b;font-family:'Liberation Serif',serif;font-weight:700;transform:translate(0.70px,0.00px) scaleX(0.9369);">,</span>
<span class="t" id="t30" style="left:1603px;top:209px;font-size:17.5px;color:#3b3b3b;font-family:'Liberation Sans',sans-serif;transform:translate(0.07px,0.40px) scaleX(1.1444);-webkit-text-stroke:0.2px #3b3b3b;">.0</span>
<span class="t" id="t31" style="left:1593px;top:225px;font-size:17.5px;color:#3b3b3b;font-family:'Liberation Sans',sans-serif;transform:translate(0.08px,0.60px) scaleX(1.0972);-webkit-text-stroke:0.2px #3b3b3b;">.00</span>
<span class="t" id="t32" style="left:1644px;top:209px;font-size:17.5px;color:#3b3b3b;font-family:'Liberation Sans',sans-serif;transform:translate(0.71px,0.40px) scaleX(1.1126);-webkit-text-stroke:0.2px #3b3b3b;">.00</span>
<span class="t" id="t33" style="left:1654px;top:225px;font-size:17.5px;color:#3b3b3b;font-family:'Liberation Sans',sans-serif;transform:translate(0.88px,0.60px) scaleX(1.1473);-webkit-text-stroke:0.2px #3b3b3b;">.0</span>
<span class="t" id="t34" style="left:1727px;top:207px;font-size:22.2px;color:#111;font-family:'Liberation Sans',sans-serif;transform:translate(0.14px,0.60px) scaleX(1.0306);-webkit-text-stroke:0.3px #111;">Conditional</span>
<span class="t" id="t35" style="left:1728px;top:231px;font-size:22.2px;color:#111;font-family:'Liberation Sans',sans-serif;transform:translate(0.14px,0.30px) scaleX(1.0488);-webkit-text-stroke:0.3px #111;">Formatting</span>
<span class="t" id="t36" style="left:1861px;top:207px;font-size:22.2px;color:#111;font-family:'Liberation Sans',sans-serif;transform:translate(0.13px,0.60px) scaleX(1.0099);-webkit-text-stroke:0.3px #111;">Format</span>
<span class="t" id="t37" style="left:1855px;top:231px;font-size:22.2px;color:#111;font-family:'Liberation Sans',sans-serif;transform:translate(0.94px,0.30px) scaleX(1.0080);-webkit-text-stroke:0.3px #111;">as Table</span>
<span class="t" id="t38" style="left:1977px;top:207px;font-size:22.2px;color:#111;font-family:'Liberation Sans',sans-serif;transform:translate(0.02px,0.60px) scaleX(1.0320);-webkit-text-stroke:0.3px #111;">Cell</span>
<span class="t" id="t39" style="left:1966px;top:231px;font-size:22.2px;color:#111;font-family:'Liberation Sans',sans-serif;transform:translate(0.07px,0.30px) scaleX(1.0177);-webkit-text-stroke:0.3px #111;">Styles</span>
<span class="t" id="t40" style="left:2105px;top:207px;font-size:22.2px;color:#111;font-family:'Liberation Sans',sans-serif;transform:translate(0.58px,0.80px) scaleX(1.0347);-webkit-text-stroke:0.3px #111;">Insert</span>
<span class="t" id="t41" style="left:2202px;top:207px;font-size:22.2px;color:#111;font-family:'Liberation Sans',sans-serif;transform:translate(0.20px,0.60px) scaleX(0.9791);-webkit-text-stroke:0.3px #111;">Delete</span>
<span class="t" id="t42" style="left:20px;top:283px;font-size:25px;color:#1c1c1c;font-family:'Liberation Sans',sans-serif;transform:translate(0.49px,0.00px) scaleX(0.9550);-webkit-text-stroke:0.3px #1c1c1c;">A5</span>
<span class="t" id="t43" style="left:317px;top:279px;font-size:31px;color:#3c3c3c;font-family:'Liberation Serif',serif;font-style:italic;transform:translate(0.29px,0.20px) scaleX(1.2171);-webkit-text-stroke:0.6px #3c3c3c;">fx</span>
<span class="t" id="t44" style="left:95px;top:340px;font-size:22px;color:#1e7145;font-family:'Liberation Sans',sans-serif;font-weight:700;transform:translate(0.02px,0.20px) scaleX(1.0067);">A</span>
<span class="t" id="t45" style="left:217px;top:340px;font-size:22px;color:#505050;font-family:'Liberation Sans',sans-serif;transform:translate(0.20px,0.20px) scaleX(0.9241);-webkit-text-stroke:0.45px #505050;">B</span>
<span class="t" id="t46" style="left:421px;top:340px;font-size:22px;color:#505050;font-family:'Liberation Sans',sans-serif;transform:translate(0.20px,0.20px) scaleX(0.8722);-webkit-text-stroke:0.45px #505050;">C</span>
<span class="t" id="t47" style="left:631px;top:340px;font-size:22px;color:#505050;font-family:'Liberation Sans',sans-serif;transform:translate(0.39px,0.20px) scaleX(0.9862);-webkit-text-stroke:0.45px #505050;">D</span>
<span class="t" id="t48" style="left:759px;top:340px;font-size:22px;color:#505050;font-family:'Liberation Sans',sans-serif;transform:translate(0.61px,0.20px) scaleX(0.7950);-webkit-text-stroke:0.45px #505050;">E</span>
<span class="t" id="t49" style="left:883px;top:340px;font-size:22px;color:#505050;font-family:'Liberation Sans',sans-serif;transform:translate(0.41px,0.20px) scaleX(0.8656);-webkit-text-stroke:0.45px #505050;">F</span>
<span class="t" id="t50" style="left:1037px;top:340px;font-size:22px;color:#505050;font-family:'Liberation Sans',sans-serif;transform:translate(0.47px,0.20px) scaleX(0.9488);-webkit-text-stroke:0.45px #505050;">G</span>
<span class="t" id="t51" style="left:1195px;top:340px;font-size:22px;color:#505050;font-family:'Liberation Sans',sans-serif;transform:translate(0.20px,0.20px) scaleX(0.9859);-webkit-text-stroke:0.45px #505050;">H</span>
<span class="t" id="t52" style="left:1347px;top:340px;font-size:22px;color:#505050;font-family:'Liberation Sans',sans-serif;transform:translate(0.70px,0.20px) scaleX(1.0000);-webkit-text-stroke:0.45px #505050;">I</span>
<span class="t" id="t53" style="left:1469px;top:340px;font-size:22px;color:#505050;font-family:'Liberation Sans',sans-serif;transform:translate(0.22px,0.20px) scaleX(0.7241);-webkit-text-stroke:0.45px #505050;">J</span>
<span class="t" id="t54" style="left:1629px;top:340px;font-size:22px;color:#505050;font-family:'Liberation Sans',sans-serif;transform:translate(0.68px,0.20px) scaleX(0.8900);-webkit-text-stroke:0.45px #505050;">K</span>
<span class="t" id="t55" style="left:1857px;top:340px;font-size:22px;color:#505050;font-family:'Liberation Sans',sans-serif;transform:translate(0.72px,0.20px) scaleX(0.8631);-webkit-text-stroke:0.45px #505050;">L</span>
<span class="t" id="t56" style="left:2069px;top:340px;font-size:22px;color:#505050;font-family:'Liberation Sans',sans-serif;transform:translate(0.23px,0.20px) scaleX(1.1933);-webkit-text-stroke:0.45px #505050;">M</span>
<span class="t" id="t57" style="left:2203px;top:340px;font-size:22px;color:#505050;font-family:'Liberation Sans',sans-serif;transform:translate(0.33px,0.20px) scaleX(1.0616);-webkit-text-stroke:0.45px #505050;">N</span>
<span class="t" id="t58" style="left:16px;top:377px;font-size:22px;color:#505050;font-family:'Liberation Sans',sans-serif;transform:translate(0.73px,0.60px) scaleX(0.8248);-webkit-text-stroke:0.45px #505050;">1</span>
<span class="t" id="t59" style="left:15px;top:409px;font-size:22px;color:#505050;font-family:'Liberation Sans',sans-serif;transform:translate(0.79px,0.40px) scaleX(0.9756);-webkit-text-stroke:0.45px #505050;">2</span>
<span class="t" id="t60" style="left:15px;top:441px;font-size:22px;color:#505050;font-family:'Liberation Sans',sans-serif;transform:translate(0.91px,0.40px) scaleX(0.9557);-webkit-text-stroke:0.45px #505050;">3</span>
<span class="t" id="t61" style="left:16px;top:473px;font-size:22px;color:#505050;font-family:'Liberation Sans',sans-serif;transform:translate(0.07px,0.40px) scaleX(0.9176);-webkit-text-stroke:0.45px #505050;">4</span>
<span class="t" id="t62" style="left:50px;top:377px;font-size:22px;color:#000;font-family:'Liberation Sans',sans-serif;transform:translate(0.39px,0.60px) scaleX(0.9790);-webkit-text-stroke:0.35px #000;">Reference</span>
<span class="t" id="t63" style="left:163px;top:377px;font-size:22px;color:#000;font-family:'Liberation Sans',sans-serif;transform:translate(0.45px,0.60px) scaleX(0.9809);-webkit-text-stroke:0.35px #000;">JournalDate</span>
<span class="t" id="t64" style="left:294px;top:377px;font-size:22px;color:#000;font-family:'Liberation Sans',sans-serif;transform:translate(0.15px,0.60px) scaleX(0.9662);-webkit-text-stroke:0.35px #000;">JournalType</span>
<span class="t" id="t65" style="left:569px;top:377px;font-size:22px;color:#000;font-family:'Liberation Sans',sans-serif;transform:translate(0.78px,0.60px) scaleX(1.0107);-webkit-text-stroke:0.35px #000;">PartnerName</span>
<span class="t" id="t66" style="left:715px;top:377px;font-size:22px;color:#000;font-family:'Liberation Sans',sans-serif;transform:translate(0.60px,0.60px) scaleX(1.0491);-webkit-text-stroke:0.35px #000;">Narration</span>
<span class="t" id="t67" style="left:824px;top:377px;font-size:22px;color:#000;font-family:'Liberation Sans',sans-serif;transform:translate(0.24px,0.60px) scaleX(0.9511);-webkit-text-stroke:0.35px #000;">AccountCode</span>
<span class="t" id="t68" style="left:963px;top:377px;font-size:22px;color:#000;font-family:'Liberation Sans',sans-serif;transform:translate(0.85px,0.60px) scaleX(1.0080);-webkit-text-stroke:0.35px #000;">Description</span>
<span class="t" id="t69" style="left:1135px;top:377px;font-size:22px;color:#000;font-family:'Liberation Sans',sans-serif;transform:translate(0.62px,0.60px) scaleX(1.0208);-webkit-text-stroke:0.35px #000;">DebitAmount</span>
<span class="t" id="t70" style="left:1279px;top:377px;font-size:22px;color:#000;font-family:'Liberation Sans',sans-serif;transform:translate(0.77px,0.60px) scaleX(1.0075);-webkit-text-stroke:0.35px #000;">CreditAmount</span>
<span class="t" id="t71" style="left:1429px;top:377px;font-size:22px;color:#000;font-family:'Liberation Sans',sans-serif;transform:translate(0.68px,0.60px) scaleX(0.9497);-webkit-text-stroke:0.35px #000;">Currency</span>
<span class="t" id="t72" style="left:1527px;top:377px;font-size:22px;color:#000;font-family:'Liberation Sans',sans-serif;transform:translate(0.53px,0.60px) scaleX(1.0044);-webkit-text-stroke:0.35px #000;">DebitBalanceAmount</span>
<span class="t" id="t73" style="left:1751px;top:377px;font-size:22px;color:#000;font-family:'Liberation Sans',sans-serif;transform:translate(0.75px,0.60px) scaleX(0.9967);-webkit-text-stroke:0.35px #000;">CreditBalanceAmount</span>
<span class="t" id="t74" style="left:1982px;top:377px;font-size:22px;color:#000;font-family:'Liberation Sans',sans-serif;transform:translate(0.21px,0.60px) scaleX(0.9762);-webkit-text-stroke:0.35px #000;">TaxKeyName</span>
<span class="t" id="t75" style="left:2185px;top:377px;font-size:22px;color:#000;font-family:'Liberation Sans',sans-serif;transform:translate(0.88px,0.60px) scaleX(0.9798);-webkit-text-stroke:0.35px #000;">Tags</span>
<span class="t" id="t76" style="left:141px;top:409px;font-size:22px;color:#000;font-family:'Liberation Sans',sans-serif;transform:translate(0.45px,0.50px) scaleX(0.9537);-webkit-text-stroke:0.35px #000;">6</span>
<span class="t" id="t77" style="left:164px;top:409px;font-size:22px;color:#000;font-family:'Liberation Sans',sans-serif;transform:translate(0.22px,0.50px) scaleX(0.9744);-webkit-text-stroke:0.35px #000;">03.01.2022</span>
<span class="t" id="t78" style="left:293px;top:409px;font-size:22px;color:#000;font-family:'Liberation Sans',sans-serif;transform:translate(0.24px,0.50px) scaleX(0.9818);-webkit-text-stroke:0.35px #000;">Iepirkšanas nodokļa rēķins</span>
<span class="t" id="t79" style="left:569px;top:409px;font-size:22px;color:#000;font-family:'Liberation Sans',sans-serif;transform:translate(0.76px,0.50px) scaleX(0.9895);-webkit-text-stroke:0.35px #000;">Namirs SIA</span>
<span class="t" id="t80" style="left:745px;top:409px;font-size:22px;color:#000;font-family:'Liberation Sans',sans-serif;transform:translate(0.64px,0.50px) scaleX(0.9635);-webkit-text-stroke:0.35px #000;">Dec-21</span>
<span class="t" id="t81" style="left:964px;top:409px;font-size:22px;color:#000;font-family:'Liberation Sans',sans-serif;transform:translate(0.40px,0.50px) scaleX(0.9857);-webkit-text-stroke:0.35px #000;">sakaru izdevumi</span>
<span class="t" id="t82" style="left:2185px;top:409px;font-size:22px;color:#000;font-family:'Liberation Sans',sans-serif;transform:translate(0.81px,0.50px) scaleX(0.9440);-webkit-text-stroke:0.35px #000;">LMT</span>
<span class="t" id="t83" style="left:141px;top:441px;font-size:22px;color:#000;font-family:'Liberation Sans',sans-serif;transform:translate(0.74px,0.30px) scaleX(0.9248);-webkit-text-stroke:0.35px #000;">6</span>
<span class="t" id="t84" style="left:164px;top:441px;font-size:22px;color:#000;font-family:'Liberation Sans',sans-serif;transform:translate(0.06px,0.30px) scaleX(0.9754);-webkit-text-stroke:0.35px #000;">03.01.2022</span>
<span class="t" id="t85" style="left:293px;top:441px;font-size:22px;color:#000;font-family:'Liberation Sans',sans-serif;transform:translate(0.19px,0.30px) scaleX(0.9820);-webkit-text-stroke:0.35px #000;">Iepirkšanas nodokļa rēķins</span>
<span class="t" id="t86" style="left:569px;top:441px;font-size:22px;color:#000;font-family:'Liberation Sans',sans-serif;transform:translate(0.73px,0.30px) scaleX(0.9893);-webkit-text-stroke:0.35px #000;">Namirs SIA</span>
<span class="t" id="t87" style="left:745px;top:441px;font-size:22px;color:#000;font-family:'Liberation Sans',sans-serif;transform:translate(0.64px,0.30px) scaleX(0.9638);-webkit-text-stroke:0.35px #000;">Dec-21</span>
<span class="t" id="t88" style="left:964px;top:441px;font-size:22px;color:#000;font-family:'Liberation Sans',sans-serif;transform:translate(0.42px,0.30px) scaleX(0.9855);-webkit-text-stroke:0.35px #000;">sakaru izdevumi</span>
<span class="t" id="t89" style="left:2185px;top:441px;font-size:22px;color:#000;font-family:'Liberation Sans',sans-serif;transform:translate(0.81px,0.30px) scaleX(0.9455);-webkit-text-stroke:0.35px #000;">LMT</span>
<span class="t" id="t90" style="left:906px;top:409px;font-size:22px;color:#000;font-family:'Liberation Sans',sans-serif;transform:translate(0.16px,0.50px) scaleX(0.9764);-webkit-text-stroke:0.35px #000;">7710</span>
<span class="t" id="t91" style="left:906px;top:441px;font-size:22px;color:#000;font-family:'Liberation Sans',sans-serif;transform:translate(0.14px,0.30px) scaleX(0.9765);-webkit-text-stroke:0.35px #000;">5310</span>
<span class="t" id="t92" style="left:1245px;top:409px;font-size:22px;color:#000;font-family:'Liberation Sans',sans-serif;transform:translate(0.82px,0.50px) scaleX(0.9885);-webkit-text-stroke:0.35px #000;">10</span>
<span class="t" id="t93" style="left:1378px;top:441px;font-size:22px;color:#000;font-family:'Liberation Sans',sans-serif;transform:translate(0.30px,0.30px) scaleX(0.9471);-webkit-text-stroke:0.35px #000;">12.1</span>
<span class="t" id="t94" style="left:1981px;top:441px;font-size:22px;color:#000;font-family:'Liberation Sans',sans-serif;transform:translate(0.64px,0.30px) scaleX(0.9610);-webkit-text-stroke:0.35px #000;">Priekšnodoklis 21%</span>
</div>
</div></body></html>
